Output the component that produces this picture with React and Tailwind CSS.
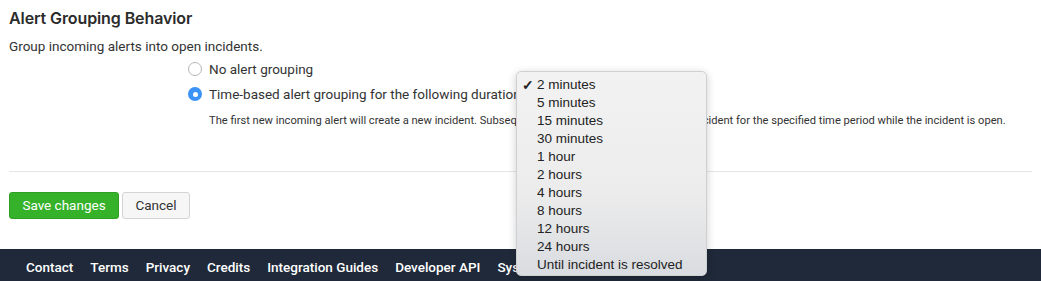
import React from 'react';

const durations = [
    '2 minutes',
    '5 minutes',
    '15 minutes',
    '30 minutes',
    '1 hour',
    '2 hours',
    '4 hours',
    '8 hours',
    '12 hours',
    '24 hours',
    'Until incident is resolved',
];

const footerLinks = ['Contact', 'Terms', 'Privacy', 'Credits', 'Integration Guides', 'Developer API', 'System Status'];

function Radio({ checked }) {
    return checked ? (
        <span className="w-[14px] h-[14px] rounded-full bg-[#3b93f7] flex items-center justify-center shrink-0">
            <span className="w-[5px] h-[5px] rounded-full bg-white"></span>
        </span>
    ) : (
        <span className="w-[14px] h-[14px] rounded-full border border-[#b5b5b5] bg-white shrink-0"></span>
    );
}

export default function App() {
    return (
        <div className="relative w-[1041px] h-[281px] overflow-hidden bg-white text-[#333] font-['Roboto',sans-serif]">
            <div className="px-[9px] pt-[8px]">
                {/* Section header */}
                <h2 className="text-[16px] leading-[20px] font-semibold text-[#2b2b2b] tracking-[-0.1px] font-['Inter',sans-serif]">Alert Grouping Behavior</h2>
                <p className="mt-[9px] text-[13.5px] leading-[18px] text-[#333]">Group incoming alerts into open incidents.</p>

                {/* Options */}
                <div className="ml-[179px] mt-[5px] flex flex-col">
                    <label className="flex items-center gap-[7px] h-[18px]">
                        <Radio checked={false} />
                        <span className="text-[13.5px] text-[#333]">No alert grouping</span>
                    </label>
                    <label className="flex items-center gap-[7px] h-[18px] mt-[7px]">
                        <Radio checked />
                        <span className="text-[13.5px] text-[#333]">Time-based alert grouping for the following duration:</span>
                    </label>
                    <p className="ml-[21px] mt-[11px] text-[11.15px] leading-[14px] text-[#333] whitespace-nowrap">
                        The first new incoming alert will create a new incident. Subsequent alerts will be grouped into that incident for the specified time period while the incident is open.
                    </p>
                </div>

                <div className="mt-[43px] border-t border-[#e6e6e6]"></div>

                {/* Actions */}
                <div className="mt-[20px] flex gap-[3px]">
                    <button className="h-[27px] w-[110px] rounded-[3px] bg-[#35b22a] border border-[#2ea124] text-white text-[13.5px]">Save changes</button>
                    <button className="h-[27px] w-[68px] rounded-[3px] bg-[#f6f6f6] border border-[#d4d4d4] text-[#333] text-[13.5px]">Cancel</button>
                </div>
            </div>

            {/* Footer */}
            <footer className="mt-[30px] h-[40px] bg-[#1f2939] flex items-start pt-[9px] pl-[26px] gap-[17px]">
                {footerLinks.map(link => (
                    <span key={link} className="text-white text-[13.5px] font-medium leading-[18px]">{link}</span>
                ))}
            </footer>

            {/* Native select menu */}
            <div className="absolute left-[516px] top-[71px] w-[191px] h-[205px] rounded-[5px] border border-[#d0d0d0] bg-gradient-to-b from-[#f2f2f2] via-[#ececec] via-60% to-[#d9dce0] shadow-[0_2px_8px_rgba(0,0,0,0.2)] pt-[4px]">
                {durations.map((d, i) => (
                    <div key={d} className="relative h-[18px] leading-[18px] pl-[20px] text-[13.5px] text-[#222] font-['Liberation_Sans',sans-serif]">
                        {i === 0 && <span className="absolute left-[5px] top-0 text-[14px] font-bold">✓</span>}
                        {d}
                    </div>
                ))}
            </div>
        </div>
    );
}
